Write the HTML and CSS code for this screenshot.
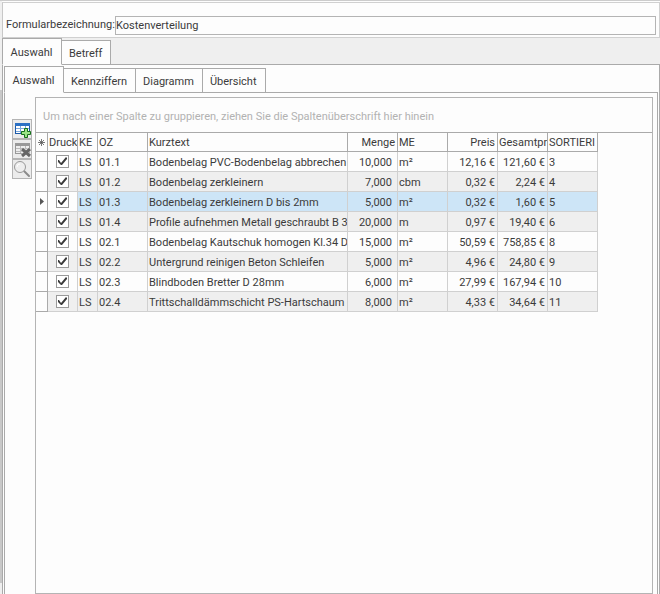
FILE: index.html
```
<!DOCTYPE html>
<html lang="de">
<head>
<meta charset="utf-8">
<title>Kostenverteilung</title>
<link rel="stylesheet" href="styles.css">
</head>
<body>
<div class="rail"><div class="rail-thumb"></div></div>
<main class="window">
  <form class="form-row">
    <label for="name">Formularbezeichnung:</label>
    <input id="name" class="text-input" type="text" value="Kostenverteilung">
  </form>
  <nav class="tabs tabs-outer">
    <button type="button" class="tab active">Auswahl</button>
    <button type="button" class="tab">Betreff</button>
  </nav>
  <section class="panel">
    <nav class="tabs">
      <button type="button" class="tab active">Auswahl</button>
      <button type="button" class="tab">Kennziffern</button>
      <button type="button" class="tab">Diagramm</button>
      <button type="button" class="tab">Übersicht</button>
    </nav>
    <section class="panel-inner">
      <div class="toolbar">
        <button type="button" class="tool" aria-label="Hinzufügen">
          <svg width="18" height="18" viewBox="0 0 18 18">
            <rect x="2.5" y="3.5" width="14" height="10" fill="#fff" stroke="#1c5aa8"/>
            <path d="M2 3h15v3H2z" fill="#2b70c4"/>
            <path d="M3 8.5h13M3 11.5h13M7.5 6v7M12.5 6v7" stroke="#7aa7dc" fill="none"/>
            <path d="M11.5 8.5h3v3h3v3h-3v3h-3v-3h-3v-3h3z" fill="#9be487" stroke="#14701b"/>
          </svg>
        </button>
        <button type="button" class="tool" aria-label="Löschen">
          <svg width="18" height="18" viewBox="0 0 18 18">
            <rect x="2.5" y="3.5" width="14" height="10" fill="#eee" stroke="#999"/>
            <path d="M2 3h15v3H2z" fill="#999"/>
            <path d="M3 8.5h13M3 11.5h13M7.5 6v7M12.5 6v7" stroke="#bbb" fill="none"/>
            <path d="M9 9l8 7M17 9l-8 7" stroke="#eee" stroke-width="4"/>
            <path d="M9 9l8 7M17 9l-8 7" stroke="#666" stroke-width="3"/>
          </svg>
        </button>
        <button type="button" class="tool" aria-label="Suchen">
          <svg width="18" height="18" viewBox="0 0 18 18">
            <path d="M11 11l5 5" stroke="#8b8b8b" stroke-width="2" stroke-linecap="round"/>
            <circle cx="7" cy="7" r="5.5" fill="#eee" stroke="#999"/>
            <path d="M4 7a3 3 0 0 1 3-3" stroke="#fff" fill="none"/>
          </svg>
        </button>
      </div>
      <div class="grid">
        <div class="group-hint">Um nach einer Spalte zu gruppieren, ziehen Sie die Spaltenüberschrift hier hinein</div>
        <table>
          <colgroup><col class="c-mark"><col class="c-print"><col class="c-ke"><col class="c-std"><col class="c-text"><col class="c-std"><col class="c-std"><col class="c-std"><col class="c-std"><col class="c-std"></colgroup>
          <thead>
            <tr>
              <th class="mark"><svg width="7" height="7" viewBox="0 0 7 7"><path d="M3.5 0v7M0 3.5h7M1 1l5 5M6 1l-5 5" stroke="#555" stroke-width=".8"/></svg></th>
              <th>Druck</th><th>KE</th><th>OZ</th><th>Kurztext</th><th class="num">Menge</th><th>ME</th><th class="num">Preis</th><th class="num">Gesamtpr</th><th>SORTIERI</th>
            </tr>
          </thead>
          <tbody>
            <tr><td class="mark"></td><td class="print"><input type="checkbox" aria-label="Druck 01.1" checked></td><td>LS</td><td>01.1</td><td>Bodenbelag PVC-Bodenbelag abbrechen</td><td class="num qty">10,000</td><td>m²</td><td class="num">12,16 €</td><td class="num">121,60 €</td><td>3</td></tr>
            <tr><td class="mark"></td><td class="print"><input type="checkbox" aria-label="Druck 01.2" checked></td><td>LS</td><td>01.2</td><td>Bodenbelag zerkleinern</td><td class="num qty">7,000</td><td>cbm</td><td class="num">0,32 €</td><td class="num">2,24 €</td><td>4</td></tr>
            <tr class="selected"><td class="mark"><svg width="4" height="7" viewBox="0 0 4 7"><path d="M0 0l4 3.5L0 7z" fill="#555"/></svg></td><td class="print"><input type="checkbox" aria-label="Druck 01.3" checked></td><td>LS</td><td>01.3</td><td>Bodenbelag zerkleinern D bis 2mm</td><td class="num qty">5,000</td><td>m²</td><td class="num">0,32 €</td><td class="num">1,60 €</td><td>5</td></tr>
            <tr><td class="mark"></td><td class="print"><input type="checkbox" aria-label="Druck 01.4" checked></td><td>LS</td><td>01.4</td><td>Profile aufnehmen Metall geschraubt B 30</td><td class="num qty">20,000</td><td>m</td><td class="num">0,97 €</td><td class="num">19,40 €</td><td>6</td></tr>
            <tr><td class="mark"></td><td class="print"><input type="checkbox" aria-label="Druck 02.1" checked></td><td>LS</td><td>02.1</td><td>Bodenbelag Kautschuk homogen Kl.34 D</td><td class="num qty">15,000</td><td>m²</td><td class="num">50,59 €</td><td class="num">758,85 €</td><td>8</td></tr>
            <tr><td class="mark"></td><td class="print"><input type="checkbox" aria-label="Druck 02.2" checked></td><td>LS</td><td>02.2</td><td>Untergrund reinigen Beton Schleifen</td><td class="num qty">5,000</td><td>m²</td><td class="num">4,96 €</td><td class="num">24,80 €</td><td>9</td></tr>
            <tr><td class="mark"></td><td class="print"><input type="checkbox" aria-label="Druck 02.3" checked></td><td>LS</td><td>02.3</td><td>Blindboden Bretter D 28mm</td><td class="num qty">6,000</td><td>m²</td><td class="num">27,99 €</td><td class="num">167,94 €</td><td>10</td></tr>
            <tr><td class="mark"></td><td class="print"><input type="checkbox" aria-label="Druck 02.4" checked></td><td>LS</td><td>02.4</td><td>Trittschalldämmschicht PS-Hartschaum EP</td><td class="num qty">8,000</td><td>m²</td><td class="num">4,33 €</td><td class="num">34,64 €</td><td>11</td></tr>
          </tbody>
        </table>
      </div>
    </section>
  </section>
</main>
</body>
</html>
```
FILE: styles.css
```
* {
  box-sizing: border-box;
}

body {
  margin: 0;
  height: 100vh;
  display: flex;
  border-top: 1px solid #ccc;
  background: #fdfdfd;
  color: #3b3b3b;
  font: 11px/16px Roboto, sans-serif;
}

button,
input {
  font: inherit;
  color: inherit;
}

.rail {
  width: 2px;
  padding: 89px 0 11px;
  background: #efefef;
}

.rail-thumb {
  height: 100%;
  background: #c8c8c8;
}

.window {
  flex: 1;
  min-width: 0;
  padding-top: 1px;
  display: flex;
  flex-direction: column;
}

.form-row {
  display: flex;
  align-items: center;
  height: 36px;
  padding: 10px 3px 0 3px;
  border: 1px solid #d0d0d0;
  border-left-color: #c8c8c8;
}

.form-row label {
  width: 109px;
  white-space: nowrap;
}

.text-input {
  flex: 1;
  min-width: 0;
  height: 19px;
  padding: 0;
  border: 1px solid #b4b4b4;
  background: #fdfdfd;
}

.tabs {
  display: flex;
  align-items: flex-end;
  height: 27px;
}

.tabs-outer {
  background: #efefef;
}

.tab {
  height: 25px;
  margin-left: -1px;
  padding: 2px 8px 0 7px;
  border: 1px solid #aaa;
  background: #fdfdfd;
  white-space: nowrap;
}

.tab.active {
  z-index: 1;
  width: 60px;
  height: 27px;
  margin-left: 0;
  border-bottom-color: #fdfdfd;
}

.panel {
  flex: 1;
  min-height: 0;
  display: flex;
  flex-direction: column;
  margin-top: -1px;
  padding: 1px 1px 0;
  border: solid #aaa;
  border-width: 1px 1px 0;
}

.panel-inner {
  flex: 1;
  min-height: 0;
  display: flex;
  margin-top: -1px;
  padding: 4px 4px 0 7px;
  border: solid #aaa;
  border-width: 1px 1px 0;
}

.toolbar {
  width: 20px;
  margin-right: 3px;
  padding-top: 22px;
}

.tool {
  display: block;
  width: 20px;
  height: 20px;
  padding: 0;
  border: 1px solid #b4b4b4;
  background: #ececec;
}

.tool svg {
  display: block;
}

.grid {
  flex: 1;
  min-width: 0;
  border: 1px solid #b4b4b4;
}

.group-hint {
  height: 35px;
  padding: 11px 7px 0;
  border-bottom: 1px solid #aaa;
  color: #b2b2b2;
}

table {
  width: 562px;
  table-layout: fixed;
  border-collapse: separate;
  border-spacing: 0;
}

.c-mark {
  width: 12px;
}

.c-print {
  width: 30px;
}

.c-ke {
  width: 20px;
}

.c-std {
  width: 50px;
}

.c-text {
  width: 200px;
}

th,
td {
  height: 20px;
  padding: 2px 2px 0 1px;
  border: solid #d0d0d0;
  border-width: 0 1px 1px 0;
  overflow: hidden;
  white-space: nowrap;
  text-align: left;
  font-weight: normal;
}

th {
  height: 19px;
  border-color: #aaa;
}

tbody tr:nth-child(even) {
  background: #efefef;
}

tbody tr.selected {
  background: #cde5f7;
}

.num {
  text-align: right;
}

td.qty {
  padding-right: 5px;
}

.mark,
.print {
  padding: 0;
  text-align: center;
}

.mark {
  border-color: #aaa;
  background: #fdfdfd;
}

.mark svg {
  display: block;
  margin: 0 auto;
}

.selected .print {
  background: #fdfdfd;
}

.print input {
  appearance: none;
  display: block;
  width: 13px;
  height: 13px;
  margin: 0 auto;
  border: 1px solid #999;
  background: #fff;
}

.print input:checked::after {
  content: "";
  display: block;
  width: 11px;
  height: 11px;
  background: #3b3b3b;
  clip-path: polygon(1px 4px, 2px 4px, 4px 7px, 9px 1px, 10px 2px, 10px 3px, 5px 9px, 4px 9px, 1px 6px);
}
```
